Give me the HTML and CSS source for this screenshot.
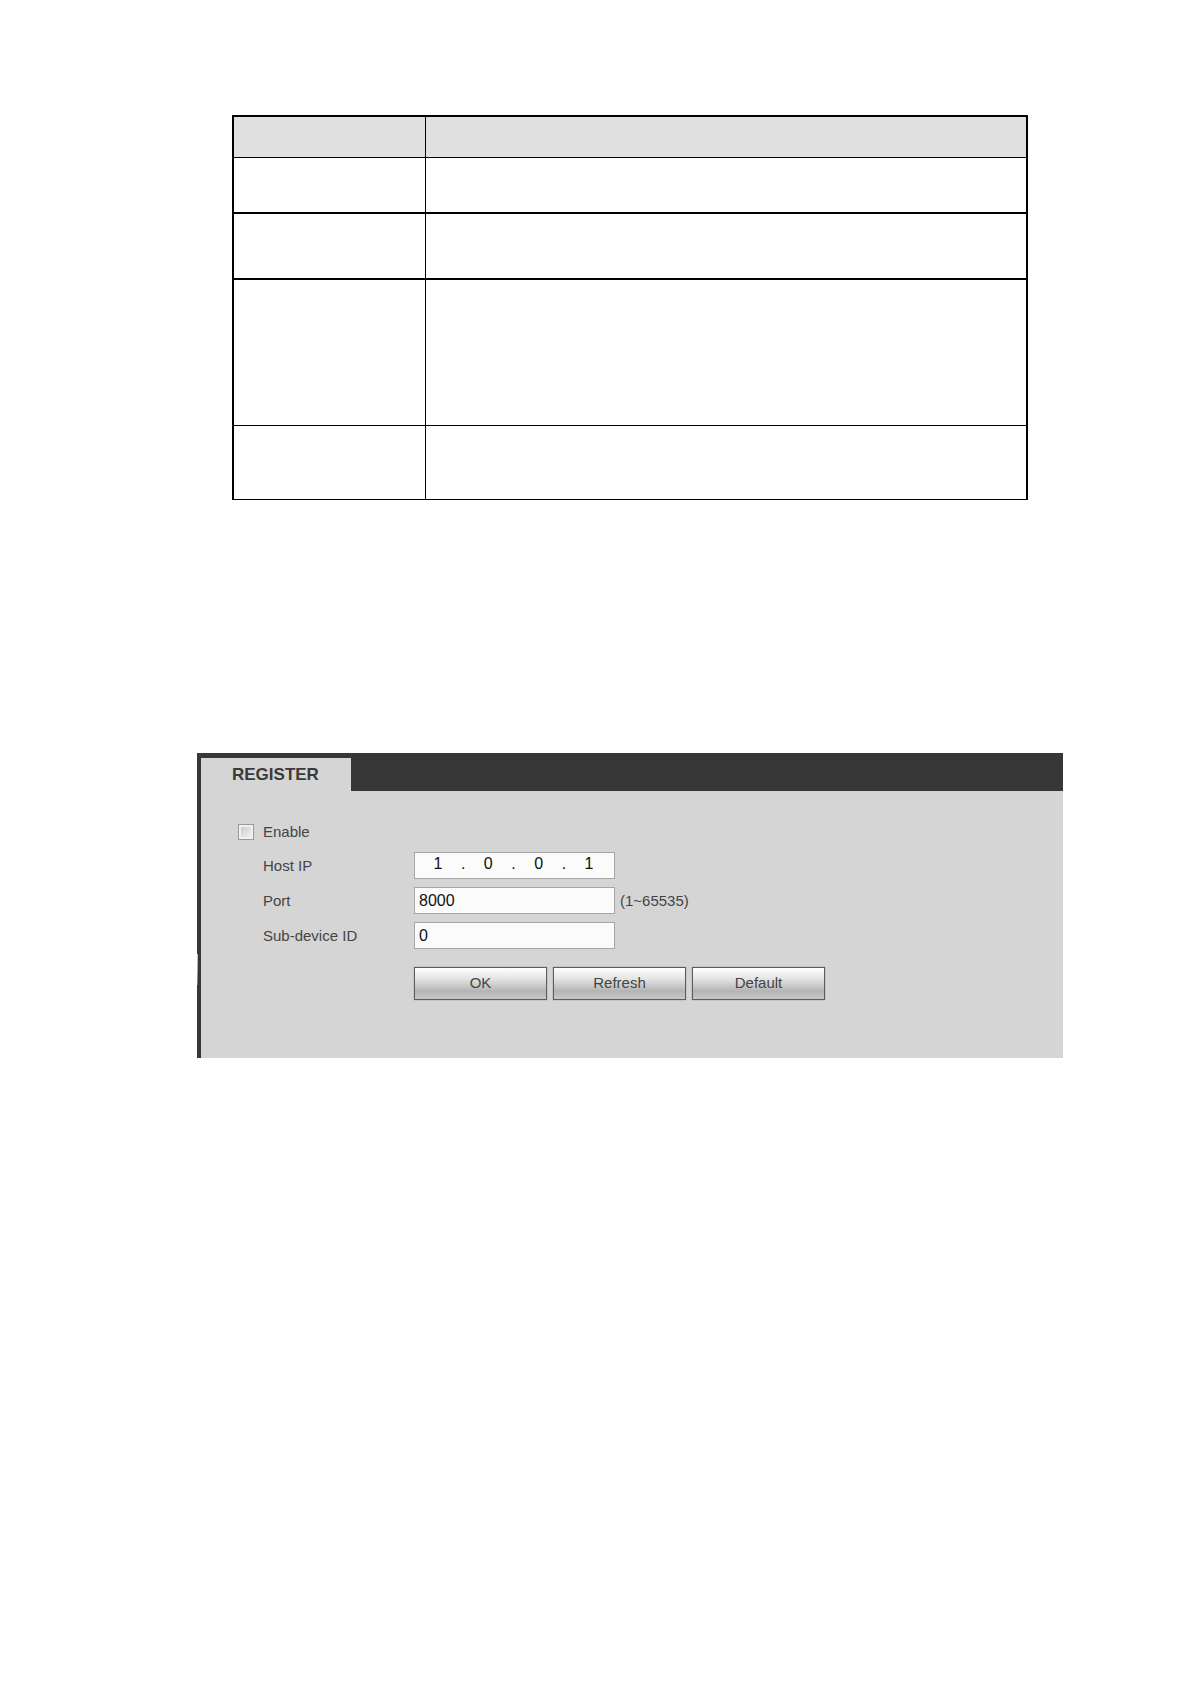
FILE: index.html
```html
<!DOCTYPE html>
<html lang="en">
<head>
<meta charset="utf-8">
<title>Register</title>
<link rel="stylesheet" href="styles.css">
</head>
<body>
<main class="page">
  <table class="params">
    <thead>
      <tr class="row-head"><th class="name"></th><th></th></tr>
    </thead>
    <tbody>
      <tr class="row-small"><td></td><td></td></tr>
      <tr class="row-medium"><td></td><td></td></tr>
      <tr class="row-large"><td></td><td></td></tr>
      <tr class="row-last"><td></td><td></td></tr>
    </tbody>
  </table>

  <section class="panel">
    <span class="marker"></span>
    <header class="tabs">
      <h1 class="tab">REGISTER</h1>
    </header>
    <form class="form">
      <div class="enable">
        <input class="check" type="checkbox" id="enable">
        <label for="enable">Enable</label>
      </div>
      <div class="fields">
        <label for="ip1">Host IP</label>
        <div class="field ip">
          <input id="ip1" value="1"><span>.</span>
          <input aria-label="Host IP part 2" value="0"><span>.</span>
          <input aria-label="Host IP part 3" value="0"><span>.</span>
          <input aria-label="Host IP part 4" value="1">
        </div>
        <label for="port">Port</label>
        <div class="with-hint">
          <input class="field" id="port" value="8000">
          <span>(1~65535)</span>
        </div>
        <label for="device">Sub-device ID</label>
        <input class="field" id="device" value="0">
      </div>
      <div class="actions">
        <button type="button">OK</button>
        <button type="button">Refresh</button>
        <button type="button">Default</button>
      </div>
    </form>
  </section>
</main>
</body>
</html>
```
FILE: styles.css
```css
* {
  box-sizing: border-box;
}

body {
  margin: 0;
  background: #fff;
  color: #444;
  font: 15px/18px "Liberation Sans", Arial, sans-serif;
}

.page {
  padding: 115px 128px 120px 197px;
}

/* Parameter table */
.params {
  width: calc(100% - 70px);
  margin: 0 35px 253px;
  table-layout: fixed;
  border-collapse: separate;
  border-spacing: 0;
  border: 2px solid #000;
  border-bottom: 0;
}

.params th,
.params td {
  padding: 0;
  border-bottom: 1px solid #000;
}

.params th:first-child,
.params td:first-child {
  border-right: 1px solid #000;
}

.params th {
  background: #e0e0e0;
}

.params .name {
  width: 192px;
}

.row-head {
  height: 41px;
}

.row-small {
  height: 56px;
}

.row-medium {
  height: 66px;
}

.row-large {
  height: 146px;
}

.row-last {
  height: 74px;
}

.params .row-small td,
.params .row-medium td {
  border-bottom-width: 2px;
}

/* Register panel */
.panel {
  position: relative;
  border-left: 4px solid #373737;
  background: #d5d5d5;
}

.marker {
  position: absolute;
  top: 201px;
  left: -4px;
  width: 1px;
  height: 31px;
  background: linear-gradient(#f0d060, #e09040 60%, #b06040);
}

.tabs {
  display: flex;
  padding-top: 5px;
  background: #373737;
}

.tab {
  width: 150px;
  margin: 0;
  padding-left: 31px;
  background: #d5d5d5;
  color: #3a3a3a;
  font-size: 17px;
  line-height: 33px;
}

.form {
  padding: 32px 37px 58px;
}

.enable {
  display: flex;
  align-items: center;
  gap: 9px;
  margin-bottom: 11px;
}

.check {
  appearance: none;
  width: 16px;
  height: 16px;
  margin: 0;
  border: 1px solid #999;
  background: linear-gradient(135deg, #c4c4c4, #f8f8f8);
  box-shadow: inset 0 0 0 2px #f0f0f0;
}

.fields {
  display: grid;
  grid-template-columns: 151px 1fr;
  row-gap: 8px;
  align-items: center;
  padding-left: 25px;
}

.field {
  width: 201px;
  height: 27px;
  padding: 0 4px;
  border: 1px solid #a6a6a6;
  background: #fbfbfb;
  color: #111;
  font: 16px/20px "Liberation Sans", Arial, sans-serif;
}

.ip {
  display: flex;
  align-items: center;
  padding: 0 2px 3px 0;
}

.ip input {
  flex: 1;
  min-width: 0;
  padding: 0;
  border: 0;
  background: none;
  color: inherit;
  font: inherit;
  text-align: center;
}

.with-hint {
  display: flex;
  align-items: center;
  gap: 5px;
}

.actions {
  display: flex;
  gap: 6px;
  margin-top: 18px;
  padding-left: 176px;
}

.actions button {
  width: 133px;
  height: 33px;
  padding: 0 0 2px;
  border: 1px solid #5c5c5c;
  background: linear-gradient(#fff, #e4e4e4 35%, #b4b4b4 75%, #c8c8c8);
  box-shadow: 0 0 1px #777;
  color: #444;
  font: inherit;
}
```
